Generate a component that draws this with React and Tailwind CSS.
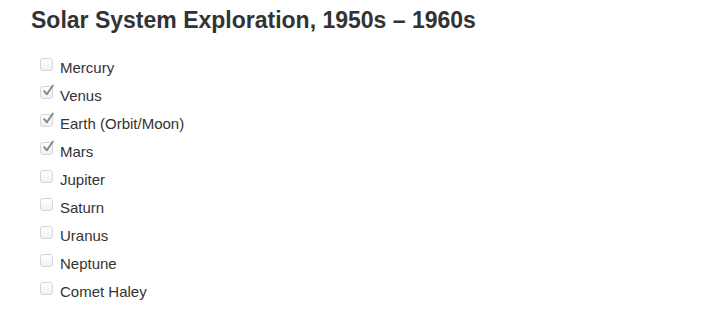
import React from "react";

const items = [
  { label: "Mercury", checked: false },
  { label: "Venus", checked: true },
  { label: "Earth (Orbit/Moon)", checked: true },
  { label: "Mars", checked: true },
  { label: "Jupiter", checked: false },
  { label: "Saturn", checked: false },
  { label: "Uranus", checked: false },
  { label: "Neptune", checked: false },
  { label: "Comet Haley", checked: false },
];

function Box({ checked }) {
  return (
    <span className="relative mt-[-1px] h-[13px] w-[13px] shrink-0 rounded-[3px] border border-[#d6d6d6] bg-gradient-to-b from-[#ffffff] to-[#f0f0f0]">
      {checked && (
        <svg viewBox="0 0 12 12" className="absolute left-[1px] top-[-3px] h-[13px] w-[13px]">
          <path d="M2 6.5 L4.5 9.5 L10 1.5" fill="none" stroke="#8a8a8a" strokeWidth="1.8" strokeLinecap="round" strokeLinejoin="round" />
        </svg>
      )}
    </span>
  );
}

export default function App() {
  return (
    <main className="min-h-screen bg-white px-[31px] pt-[7px] font-['Liberation_Sans',Arial,sans-serif] text-[#333333]">
      <h3 className="text-[23px] font-bold leading-[26px]">Solar System Exploration, 1950s – 1960s</h3>
      <ul className="mt-[26px] flex flex-col pl-[9px]">
        {items.map((item) => (
          <li key={item.label} className="flex h-[28px] items-start gap-[7px]">
            <Box checked={item.checked} />
            <span className="text-[15px] leading-[17px] text-[#333333]">{item.label}</span>
          </li>
        ))}
      </ul>
    </main>
  );
}
